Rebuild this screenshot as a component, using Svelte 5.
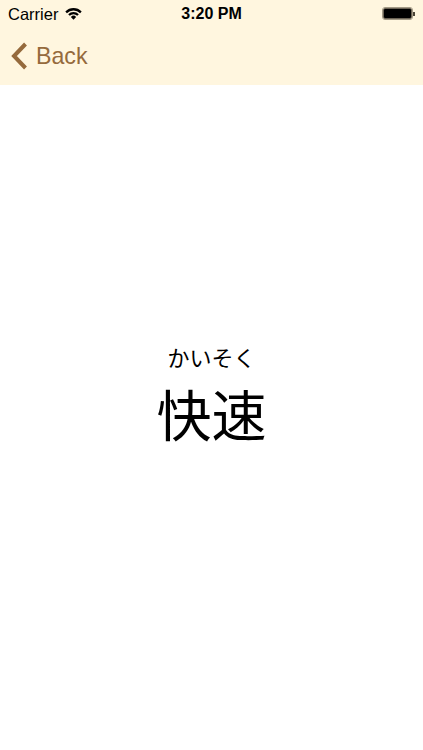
<script lang="ts">
  const reading = 'かいそく';
  const word = '快速';
</script>

<div class="screen">
  <header class="top">
    <div class="status">
      <div class="status-left">
        <span class="carrier">Carrier</span>
        <svg class="wifi" width="17" height="13" viewBox="0 0 16 12">
          <path d="M0.3 4.1 A10.9 10.9 0 0 1 15.7 4.1 L14.2 5.7 A8.7 8.7 0 0 0 1.8 5.7 Z" fill="#000" />
          <path d="M3 6.7 A7.1 7.1 0 0 1 13 6.7 L11.5 8.2 A5 5 0 0 0 4.5 8.2 Z" fill="#000" />
          <path d="M5.5 9.2 A3.5 3.5 0 0 1 10.5 9.2 L8 11.8 Z" fill="#000" />
        </svg>
      </div>
      <span class="clock">3:20 PM</span>
      <div class="battery">
        <div class="battery-body"></div>
        <div class="battery-cap"></div>
      </div>
    </div>
    <nav class="nav">
      <svg class="chevron" width="18" height="28" viewBox="0 0 18 28">
        <path d="M15.5 2 L4 14 L15.5 26" fill="none" stroke="#956a3c" stroke-width="4" />
      </svg>
      <span class="back">Back</span>
    </nav>
  </header>

  <main class="card">
    <div class="reading">{reading}</div>
    <div class="word">{word}</div>
  </main>
</div>

<style>
  :global(body) {
    margin: 0;
    background: #fff;
  }
  .screen {
    width: 423px;
    height: 750px;
    display: flex;
    flex-direction: column;
    font-family: "Liberation Sans", Arial, sans-serif;
    overflow: hidden;
  }
  .top {
    height: 85px;
    background: #fff6df;
  }
  .status {
    height: 28px;
    display: grid;
    grid-template-columns: 1fr auto 1fr;
    align-items: center;
    padding: 0 8px;
  }
  .status-left {
    display: flex;
    align-items: center;
    gap: 7px;
  }
  .carrier {
    font-size: 16.5px;
    color: #000;
  }
  .wifi {
    margin-top: -2px;
  }
  .clock {
    font-size: 16px;
    font-weight: 700;
    color: #000;
  }
  .battery {
    justify-self: end;
    display: flex;
    align-items: center;
    margin-top: -1px;
  }
  .battery-body {
    width: 27px;
    height: 9px;
    background: #000;
    border: 1px solid #6b6355;
    outline: 1px solid #a39a86;
    border-radius: 2px;
  }
  .battery-cap {
    width: 2px;
    height: 4px;
    margin-left: 1px;
    background: #4a4436;
  }
  .nav {
    display: flex;
    align-items: center;
    gap: 8px;
    padding: 1px 0 0 10px;
    height: 54px;
  }
  .chevron {
    margin-top: -1px;
  }
  .back {
    font-size: 23.2px;
    color: #956a3c;
  }
  .card {
    flex: 1;
    display: flex;
    flex-direction: column;
    align-items: center;
    padding-top: 255px;
    color: #000;
    font-family: "Noto Sans CJK JP", "Liberation Sans", sans-serif;
  }
  .reading {
    font-size: 22px;
    line-height: 32px;
  }
  .word {
    font-size: 55px;
    line-height: 80px;
  }
</style>
